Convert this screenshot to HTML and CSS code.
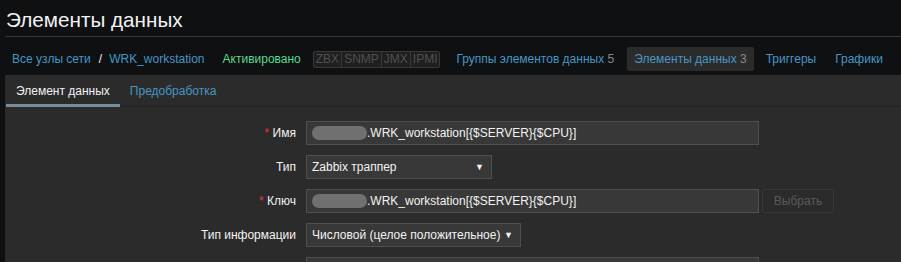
FILE: index.html
```html
<!DOCTYPE html>
<html lang="ru">
<head>
<meta charset="utf-8">
<title>Элементы данных</title>
<link rel="stylesheet" href="styles.css">
</head>
<body>
<header class="header">
  <h1 class="title">Элементы данных</h1>
</header>
<nav class="nav">
  <a class="nav-link crumb">Все узлы сети</a>
  <span class="sep">/</span>
  <a class="nav-link crumb2">WRK_workstation</a>
  <span class="status">Активировано</span>
  <span class="tags"><span class="tag">ZBX</span><span class="tag">SNMP</span><span class="tag">JMX</span><span class="tag">IPMI</span></span>
  <a class="nav-link item groups">Группы элементов данных <span class="count">5</span></a>
  <a class="nav-link item active">Элементы данных <span class="count">3</span></a>
  <a class="nav-link item">Триггеры</a>
  <a class="nav-link item">Графики</a>
  <a class="nav-link item">Правила</a>
</nav>
<main class="panel">
  <div class="tabs">
    <span class="tab tab-active">Элемент данных</span>
    <span class="tab">Предобработка</span>
  </div>
  <form class="form">
    <div class="row">
      <label class="label"><span class="req">*</span> Имя</label>
      <div class="input wide"><span class="blur"></span>.WRK_workstation[{$SERVER}{$CPU}]</div>
    </div>
    <div class="row">
      <label class="label">Тип</label>
      <div class="input select type">Zabbix траппер<span class="arrow">▼</span></div>
    </div>
    <div class="row">
      <label class="label"><span class="req">*</span> Ключ</label>
      <div class="input wide"><span class="blur"></span>.WRK_workstation[{$SERVER}{$CPU}]</div>
      <button class="btn" type="button" disabled>Выбрать</button>
    </div>
    <div class="row">
      <label class="label">Тип информации</label>
      <div class="input select info">Числовой (целое положительное)<span class="arrow">▼</span></div>
    </div>
    <div class="row">
      <span class="label"></span>
      <div class="input wide"></div>
    </div>
  </form>
</main>
</body>
</html>
```
FILE: styles.css
```css
html, body {
  margin: 0;
  padding: 0;
  background: #0e1012;
  font-family: "Liberation Sans", Arial, sans-serif;
  font-size: 12px;
  color: #f2f2f2;
  overflow: hidden;
  height: 262px;
}

.header {
  margin-left: 5px;
  padding: 8px 0 4px;
  border-bottom: 1px solid #383838;
}

.title {
  margin: 0;
  font-size: 20.7px;
  font-weight: normal;
  line-height: 24px;
  padding-left: 1px;
  color: #f2f2f2;
}

.nav {
  display: flex;
  align-items: center;
  white-space: nowrap;
  margin-left: 5px;
  padding-top: 10px;
  height: 24px;
  margin-bottom: 4px;
}

.nav-link {
  color: #4796c4;
  text-decoration: none;
  line-height: 24px;
}

.crumb { padding-left: 7px; }
.sep { color: #f2f2f2; margin: 0 7px 0 8px; }
.crumb2 { margin-right: 18px; }

.status {
  color: #59db8f;
  margin-right: 12px;
}

.tags {
  display: flex;
  border: 1px solid #383838;
  border-radius: 2px;
  background: #1f1f1f;
  height: 15px;
  margin-right: 9px;
}

.tag {
  color: #4f4f4f;
  line-height: 15px;
  padding: 0 2px;
  border-left: 1px solid #383838;
}
.tag:first-child { border-left: none; }

.item {
  padding: 0 7px;
  margin-right: 5px;
  border-radius: 2px;
}

.groups { margin-right: 6px; }

.count { color: #8a8a8a; }

.active {
  background: #2b2b2b;
}

.panel {
  margin-left: 5px;
  background: #2b2b2b;
  height: 200px;
}

.tabs {
  display: flex;
  border-bottom: 1px solid #232323;
  padding-left: 1px;
}

.tab {
  color: #4796c4;
  padding: 9px 10px 6px;
  line-height: 14px;
  border-bottom: 3px solid transparent;
  margin-bottom: -1px;
}

.tab-active {
  color: #f2f2f2;
  border-bottom-color: #768d99;
}

.form {
  padding-top: 14px;
}

.row {
  display: flex;
  align-items: center;
  height: 24px;
  margin-bottom: 10px;
}

.label {
  width: 291px;
  text-align: right;
  margin-right: 10px;
  color: #f2f2f2;
}

.req { color: #e33734; }

.input {
  box-sizing: border-box;
  height: 24px;
  background: #383838;
  border: 1px solid #4f4f4f;
  padding: 0 5px;
  line-height: 22px;
  display: flex;
  align-items: center;
  color: #f2f2f2;
  white-space: nowrap;
}

.wide { width: 453px; }
.type { width: 186px; }
.info { width: 215px; }

.select { justify-content: space-between; }

.arrow {
  font-size: 9px;
  color: #f2f2f2;
  margin-right: 2px;
}

.blur {
  display: inline-block;
  width: 55px;
  height: 14px;
  background: #707070;
  border-radius: 7px;
  filter: blur(0.6px);
}

.btn {
  box-sizing: border-box;
  height: 24px;
  width: 72px;
  margin-left: 3px;
  background: #2b2b2b;
  border: 1px solid #383838;
  border-radius: 2px;
  color: #5a5a5a;
  font-family: "Liberation Sans", Arial, sans-serif;
  font-size: 12px;
  padding: 0;
}
```
